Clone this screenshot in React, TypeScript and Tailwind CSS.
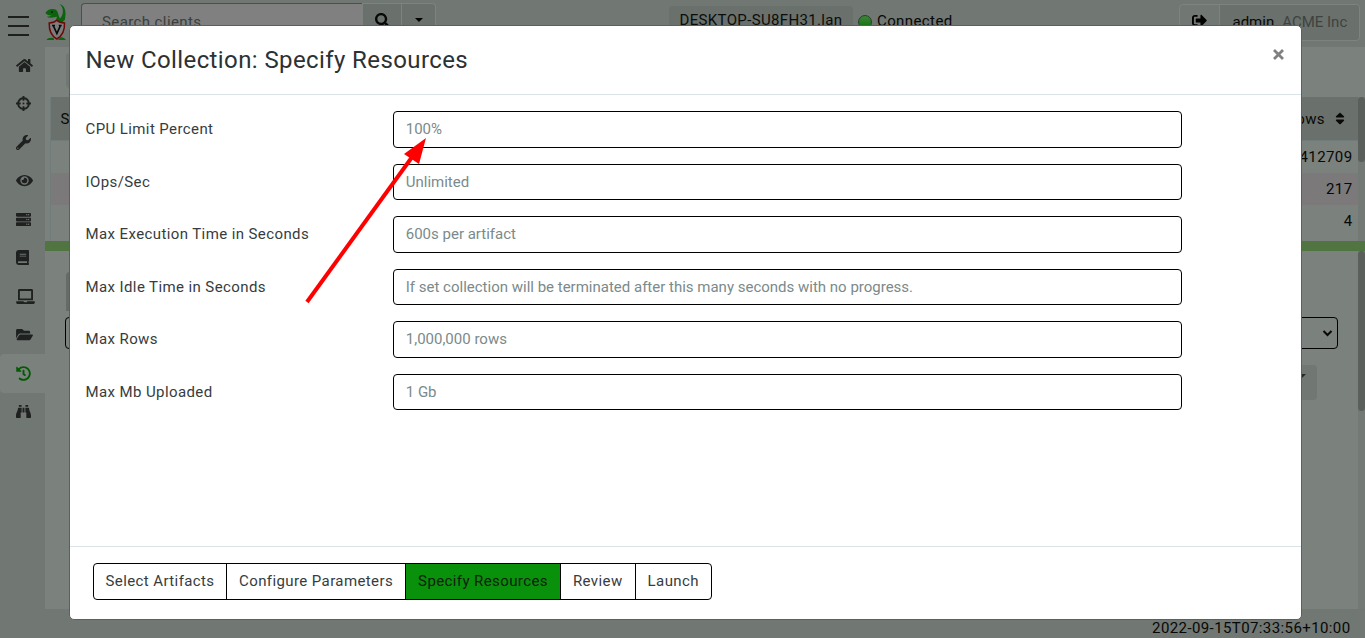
import React from "react";
import {
  FaHome, FaCrosshairs, FaWrench, FaEye, FaServer, FaBook, FaLaptop,
  FaFolderOpen, FaHistory, FaBinoculars, FaSearch, FaSignOutAlt, FaSort,
} from "react-icons/fa";

const navItems = [
  FaHome, FaCrosshairs, FaWrench, FaEye, FaServer, FaBook, FaLaptop,
  FaFolderOpen, FaHistory, FaBinoculars,
];

const fields = [
  { label: "CPU Limit Percent", hint: "100%" },
  { label: "IOps/Sec", hint: "Unlimited" },
  { label: "Max Execution Time in Seconds", hint: "600s per artifact" },
  { label: "Max Idle Time in Seconds", hint: "If set collection will be terminated after this many seconds with no progress." },
  { label: "Max Rows", hint: "1,000,000 rows" },
  { label: "Max Mb Uploaded", hint: "1 Gb" },
];

const steps = ["Select Artifacts", "Configure Parameters", "Specify Resources", "Review", "Launch"];

function Logo() {
  return (
    <svg className="mt-[3px] ml-[16px] h-[38px] w-[24px] shrink-0" viewBox="0 0 24 38">
      <path d="M14 1C20.500 2 21.500 9 19.800 17L16.500 20L10 20C12.500 17 10.500 15 12.500 13.500C9 14.500 3.500 15.500 2 13.500C4.500 13.500 6 13 7 12.500C4.500 12.500 1.500 12 0.500 10C2 6.500 7 5 10.500 6.500C13.500 8.500 13 12 15 15.500C18.500 12 19.500 4 14 1Z" fill="#0b640d" />
      <circle cx="7" cy="9" r="1" fill="#0a1a08" />
      <path d="M1.500 37C3 34.500 7 34 9 35.500V37ZM13 37L15 34.500C18 34 19 35 21 37Z" fill="#0b640d" />
      <path d="M11.800 17.300C9.500 19.500 7 20 4.200 20C4 27 5.500 32.500 11.800 36C18 32.500 19.800 27 19.500 20C16.500 20 14 19.500 11.800 17.300Z" fill="#7d7d7d" stroke="#6e0808" strokeWidth="1.500" />
      <path d="M8.200 22.500L11.900 30.500L15.500 22.500M7 22.500H10M13.800 22.500H16.700" fill="none" stroke="#0a0a0a" strokeWidth="1.700" />
    </svg>
  );
}

function TopBar() {
  return (
    <header className="flex h-[47px] shrink-0 items-start">
      <div className="ml-[7.500px] mt-4 flex w-[21.500px] flex-col gap-[7px]">
        <span className="h-[2px] bg-[#1d1f1e]" />
        <span className="h-[2px] bg-[#1d1f1e]" />
        <span className="h-[2px] bg-[#1d1f1e]" />
      </div>
      <Logo />
      <div className="ml-[12px] mt-[3px] flex h-9 w-[355px]">
        <div className="w-[281px] shrink-0 rounded-l border border-r-0 border-[#4b504d] bg-[#808080] pl-5 pt-[7px] leading-[23px] tracking-[0.400px] text-[#3a403d]">Search clients</div>
        <div className="flex w-10 shrink-0 justify-center border border-[#7d837e] bg-[#6a706b] pt-[9px] text-[#080808]"><FaSearch /></div>
        <div className="flex w-[34px] shrink-0 justify-center rounded-r border border-l-0 border-[#7d837e] bg-[#6a706b] pt-[14px]">
          <span className="h-0 w-0 border-x-[4.500px] border-t-[4.500px] border-x-transparent border-t-black" />
        </div>
      </div>
      <div className="ml-[233px] mt-1.5 h-9 w-[184px] rounded bg-[#6a706b] pl-[10.500px] pt-[3px] leading-[23px] tracking-[0.350px] text-[#0b0d0c]">DESKTOP-SU8FH31.lan</div>
      <span className="ml-[5px] mt-[15px] h-[14px] w-[14px] rounded-full border border-[#27412a] bg-gradient-to-b from-[#3d8539] to-[#037003]" />
      <span className="ml-[5px] mt-[10px] leading-[23px] tracking-[0.400px]">Connected</span>
      <div className="ml-auto mr-[5px] mt-1 flex h-[37px] w-[181px] rounded border border-[#7d837e]">
        <div className="flex w-10 justify-center border-r border-[#7d837e] pt-[8px] text-black"><FaSignOutAlt size={15} /></div>
        <div className="flex flex-1 gap-[8px] rounded-r bg-[#6a706b] pl-[12.500px] pt-[6px] leading-[23px]">
          <span>admin</span>
          <span className="text-[#3e4341]">ACME Inc</span>
        </div>
      </div>
    </header>
  );
}

function Sidebar() {
  return (
    <nav className="-mt-px flex h-[563px] w-[45px] shrink-0 flex-col text-[#1f2120]">
      {navItems.map((Icon, i) => (
        <div key={i} className={i === 8 ? "flex h-[38.500px] items-center rounded-l bg-[#7b817c] pl-4 text-[#035a05]" : "flex h-[38.500px] items-center pl-4"}>
          <Icon size={15} className={i === 0 || i === 3 ? "w-[17px]" : i === 6 ? "w-[19px]" : i === 7 ? "w-[17px]" : i === 5 ? "w-[13px]" : "w-[15px]"} />
        </div>
      ))}
    </nav>
  );
}

function Workspace() {
  return (
    <main className="flex min-w-0 flex-1 flex-col bg-[#7b817c]">
      <div className="h-[50px] shrink-0 pl-[21px] pt-1.5"><div className="h-[35px] w-40 rounded bg-[#717772]" /></div>
      <section className="flex h-[144px] shrink-0">
        <div className="ml-[5px] flex flex-1 flex-col border-l border-[#707b7a]">
          <div className="flex h-[44px] items-center justify-between border-b border-[#707b7a] bg-[#6a706b] pl-[9.500px] pr-[13.500px] pt-px tracking-[0.400px]">
            <span>S</span>
            <span className="flex items-center gap-[9.500px]">Rows <FaSort size={15} className="w-[10px] -translate-y-px" /></span>
          </div>
          <div className="h-8 pr-[5.500px] text-right leading-[33px] tracking-[0.400px]">412709</div>
          <div className="h-8 bg-[#7b7979] pr-[5.500px] text-right leading-[33px] tracking-[0.400px]">217</div>
          <div className="h-9 pr-[5.500px] text-right leading-[33px] tracking-[0.400px]">4</div>
        </div>
        <div className="w-[7px] bg-[#737974]"><div className="h-[65px] rounded bg-[#5a5f5b]" /></div>
      </section>
      <div className="h-[10px] shrink-0 bg-[#517540]" />
      <section className="flex min-h-0 flex-1">
        <div className="flex flex-1 flex-col">
          <div className="ml-[21px] mt-[21px] h-[39px] w-40 rounded-t bg-[#656b66]" />
          <div className="ml-5 mr-5 mt-1.5 flex h-8 items-center justify-end rounded border border-black pr-[4px]">
            <svg width="11" height="8" viewBox="0 0 11 8"><path d="M1.500 2L5.500 6L9.500 2" fill="none" stroke="#080808" strokeWidth="2" /></svg>
          </div>
          <div className="ml-auto mr-[41px] mt-4 h-[35px] w-[60px] rounded bg-[#717772] pl-[39px] pt-[9px]">
            <div className="h-0 w-0 border-x-[5px] border-t-[5px] border-x-transparent border-t-[#272927]" />
          </div>
        </div>
        <div className="w-[7px] bg-[#737974]"><div className="h-[160px] rounded bg-[#5a5f5b]" /></div>
      </section>
    </main>
  );
}

function CollectionDialog() {
  return (
    <div role="dialog" className="absolute left-[69px] top-[25px] flex h-[595px] w-[1233px] flex-col rounded-[5px] border border-[#5b605c] bg-white text-[#373c3e]">
      <div className="flex h-[69px] shrink-0 items-start justify-between border-b border-[#dbe5e7] pl-[15.500px] pr-[16.500px]">
        <h1 className="mt-[18px] text-2xl leading-[32px] tracking-[0.400px] text-[#2c3133]">New Collection: Specify Resources</h1>
        <button aria-label="Close" className="mt-[22px]">
          <svg width="13" height="13" viewBox="0 0 13 13"><path d="M2 2L11 11M11 2L2 11" stroke="#808080" strokeWidth="2.800" /></svg>
        </button>
      </div>
      <div className="flex flex-1 flex-col gap-4 pl-[15.500px] pt-4">
        {fields.map((f) => (
          <label key={f.label} className="flex h-[36.500px] shrink-0 items-center">
            <span className="w-[307.500px] tracking-[0.400px]">{f.label}</span>
            <input placeholder={f.hint} className="h-full w-[789px] rounded border border-black bg-white pl-[11.750px] pr-3 placeholder:text-[#7b8a8b]" />
          </label>
        ))}
      </div>
      <div className="h-[73px] shrink-0 border-t border-[#dbe5e7] pl-[23px] pt-4">
        <div className="flex h-[37px] w-max overflow-hidden rounded border border-black">
          {steps.map((s, i) => (
            <button key={s} className={i === 2 ? "border-l border-black bg-[#09910b] px-3 pb-px tracking-[0.400px] text-[#102010]" : i === 0 ? "pl-[11.500px] pr-[11.500px] pb-px tracking-[0.400px]" : "border-l border-black px-3 pb-px tracking-[0.400px]"}>{s}</button>
          ))}
        </div>
      </div>
    </div>
  );
}

export default function App() {
  return (
    <div className="relative flex h-[638px] w-[1365px] flex-col overflow-hidden bg-[#717772] font-['Roboto',sans-serif] text-[15px] text-[#080808]">
      <TopBar />
      <div className="flex h-[562px] shrink-0">
        <Sidebar />
        <Workspace />
      </div>
      <footer className="flex flex-1 items-center justify-end pr-[14.500px] pt-2 tracking-[0.400px]">2022-09-15T07:33:56+10:00</footer>
      <CollectionDialog />
      <svg className="pointer-events-none absolute left-[300px] top-[130px] h-[180px] w-[135px]" viewBox="300 130 135 180">
        <path d="M307 302L415 153" stroke="#ff0000" strokeWidth="4" />
        <path d="M426 138L404 154L419 164Z" fill="#ff0000" />
      </svg>
    </div>
  );
}
